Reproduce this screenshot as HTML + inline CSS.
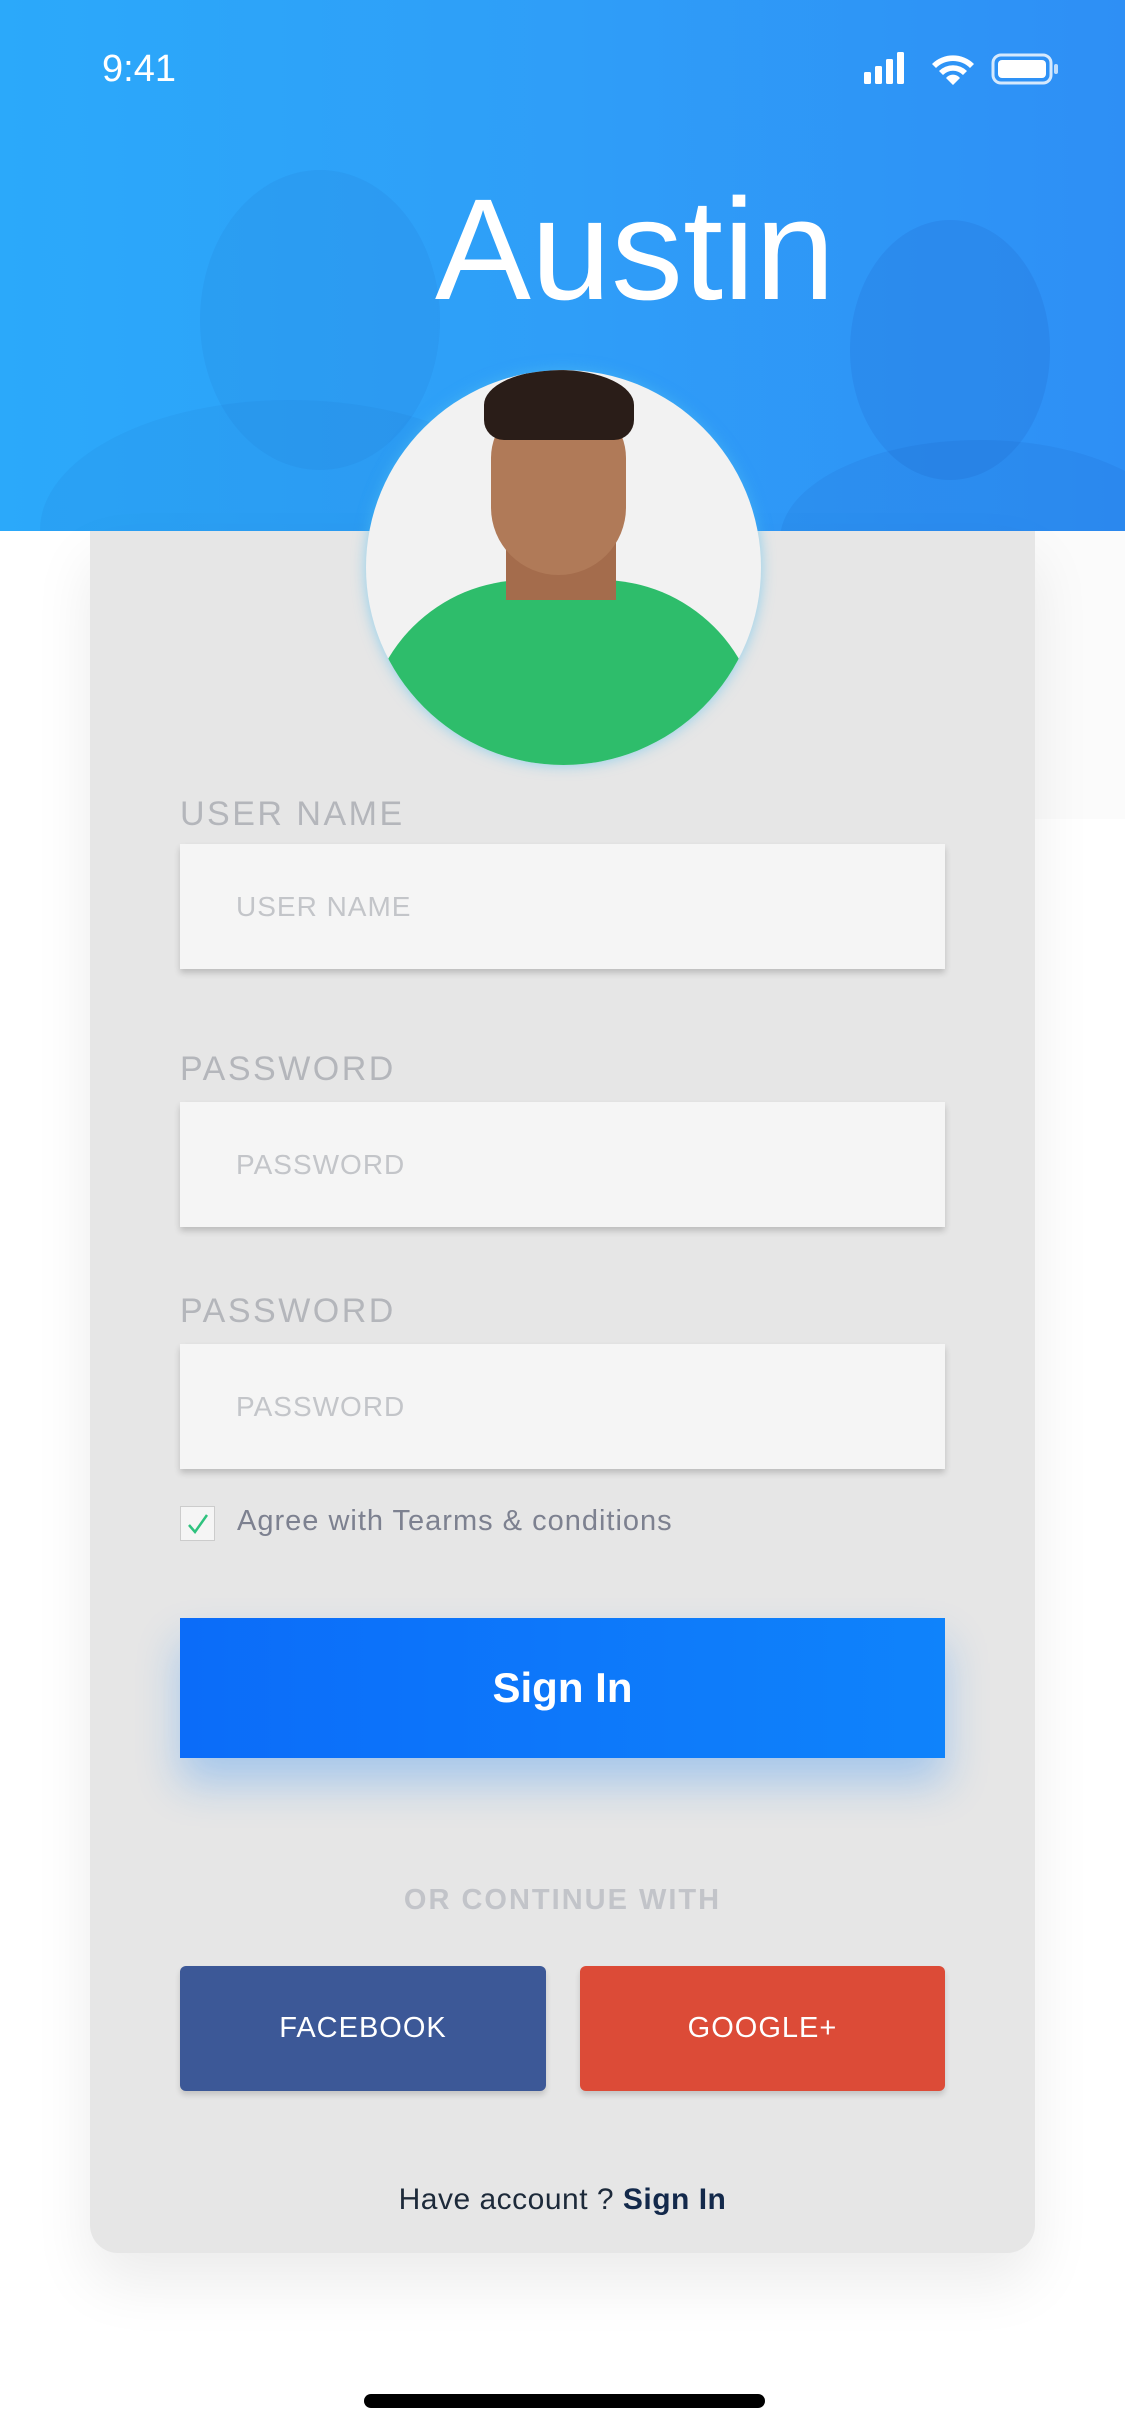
<!DOCTYPE html>
<html><head><meta charset="utf-8"><style>
*{margin:0;padding:0;box-sizing:border-box}
body{width:1125px;height:2436px;background:#fff;font-family:"Liberation Sans",sans-serif;position:relative;overflow:hidden}
.hdr{position:absolute;left:0;top:0;width:1125px;height:531px;background:linear-gradient(90deg,#2ba9fa 0%,#2f9ef8 50%,#2e8ff5 100%);overflow:hidden}
.rw{position:absolute;left:1035px;top:531px;width:90px;height:288px;background:#fbfbfb}
.card{position:absolute;left:90px;top:531px;width:945px;height:1722px;background:#e6e6e6;border-radius:0 0 28px 28px;box-shadow:0 30px 60px rgba(0,0,0,.08)}
.t{position:absolute;color:#fff}
.lbl{position:absolute;left:180px;font-size:34px;color:#b4b6bb;letter-spacing:2.5px}
.inp{position:absolute;left:180px;width:765px;height:125px;background:#f5f5f5;box-shadow:0 4px 6px rgba(0,0,0,.18);font-size:28px;color:#c3c5c9;padding-left:56px;line-height:125px;letter-spacing:1px}
</style></head><body>
<div class="hdr">
<div style="position:absolute;left:200px;top:170px;width:240px;height:300px;border-radius:50%;background:rgba(30,110,200,.12)"></div>
<div style="position:absolute;left:40px;top:400px;width:500px;height:260px;border-radius:50%;background:rgba(30,110,200,.1)"></div>
<div style="position:absolute;left:850px;top:220px;width:200px;height:260px;border-radius:50%;background:rgba(20,80,180,.13)"></div>
<div style="position:absolute;left:780px;top:440px;width:400px;height:200px;border-radius:50%;background:rgba(20,80,180,.1)"></div>
</div>
<div class="t" style="left:102px;top:48px;font-size:38px">9:41</div>
<svg style="position:absolute;left:862px;top:52px" width="200" height="34" viewBox="0 0 200 34">
<rect x="2" y="20" width="7" height="12" rx="1.5" fill="#fff"/><rect x="13" y="14" width="7" height="18" rx="1.5" fill="#fff"/><rect x="24" y="7" width="7" height="25" rx="1.5" fill="#fff"/><rect x="35" y="0" width="7" height="32" rx="1.5" fill="#fff"/>
<path d="M70 12a30 30 0 0 1 42 0l-4 4a24 24 0 0 0-34 0zM77 19a20 20 0 0 1 28 0l-4 4a14 14 0 0 0-20 0zM84 26a9 9 0 0 1 14 0l-7 7z" fill="#fff"/>
<rect x="131" y="3" width="58" height="28" rx="8" fill="none" stroke="#fff" stroke-width="3" opacity=".8"/><rect x="136" y="8" width="48" height="18" rx="4" fill="#fff"/><rect x="192" y="12" width="4" height="10" rx="2" fill="#fff" opacity=".7"/>
</svg>
<div class="t" style="left:0;width:1270px;text-align:center;top:170px;font-size:144px;line-height:160px">Austin</div>
<div class="rw"></div>
<div class="card"></div>
<div style="position:absolute;left:366px;top:370px;width:395px;height:395px;border-radius:50%;background:#f2f2f2;overflow:hidden;box-shadow:0 0 14px rgba(80,190,240,.6)">
<div style="position:absolute;left:0;top:210px;width:395px;height:260px;border-radius:160px 160px 0 0;background:#2ebd6b"></div>
<div style="position:absolute;left:140px;top:170px;width:110px;height:60px;background:#a46c4c"></div>
<div style="position:absolute;left:125px;top:30px;width:135px;height:175px;border-radius:60px 60px 70px 70px;background:#b07a58"></div>
<div style="position:absolute;left:118px;top:0;width:150px;height:70px;border-radius:50% 50% 20px 20px;background:#2a1d18"></div>
</div>
<div class="lbl" style="top:795px">USER NAME</div>
<div class="inp" style="top:844px">USER NAME</div>
<div class="lbl" style="top:1050px">PASSWORD</div>
<div class="inp" style="top:1102px">PASSWORD</div>
<div class="lbl" style="top:1292px">PASSWORD</div>
<div class="inp" style="top:1344px">PASSWORD</div>
<div style="position:absolute;left:180px;top:1506px;width:35px;height:35px;background:#f5f5f5;border:1px solid #ccc"></div>
<svg style="position:absolute;left:184px;top:1510px" width="28" height="28"><path d="M5 15l6 7L23 5" fill="none" stroke="#2ec27e" stroke-width="2.5"/></svg>
<div style="position:absolute;left:237px;top:1505px;font-size:29px;color:#7d8190;letter-spacing:1px">Agree with Tearms &amp; conditions</div>
<div style="position:absolute;left:180px;top:1618px;width:765px;height:140px;background:linear-gradient(90deg,#0b6cf9,#0f83fb);box-shadow:0 25px 40px rgba(20,130,250,.3);color:#fff;font-size:42px;font-weight:bold;text-align:center;line-height:140px">Sign In</div>
<div style="position:absolute;left:90px;width:945px;top:1884px;text-align:center;font-size:29px;font-weight:bold;color:#c2c4c9;letter-spacing:2px">OR CONTINUE WITH</div>
<div style="position:absolute;left:180px;top:1966px;width:366px;height:125px;background:#3c5897;border-radius:6px;color:#fff;font-size:29px;text-align:center;line-height:125px;box-shadow:0 4px 6px rgba(0,0,0,.15);letter-spacing:1px">FACEBOOK</div>
<div style="position:absolute;left:580px;top:1966px;width:365px;height:125px;background:#dc4b37;border-radius:6px;color:#fff;font-size:29px;text-align:center;line-height:125px;box-shadow:0 4px 6px rgba(0,0,0,.15);letter-spacing:1px">GOOGLE+</div>
<div style="position:absolute;left:90px;width:945px;top:2183px;text-align:center;font-size:30px;color:#1d2a3a;letter-spacing:.5px">Have account ? <b style="color:#13294b">Sign In</b></div>
<div style="position:absolute;left:364px;top:2394px;width:401px;height:14px;border-radius:7px;background:#000"></div>
</body></html>
